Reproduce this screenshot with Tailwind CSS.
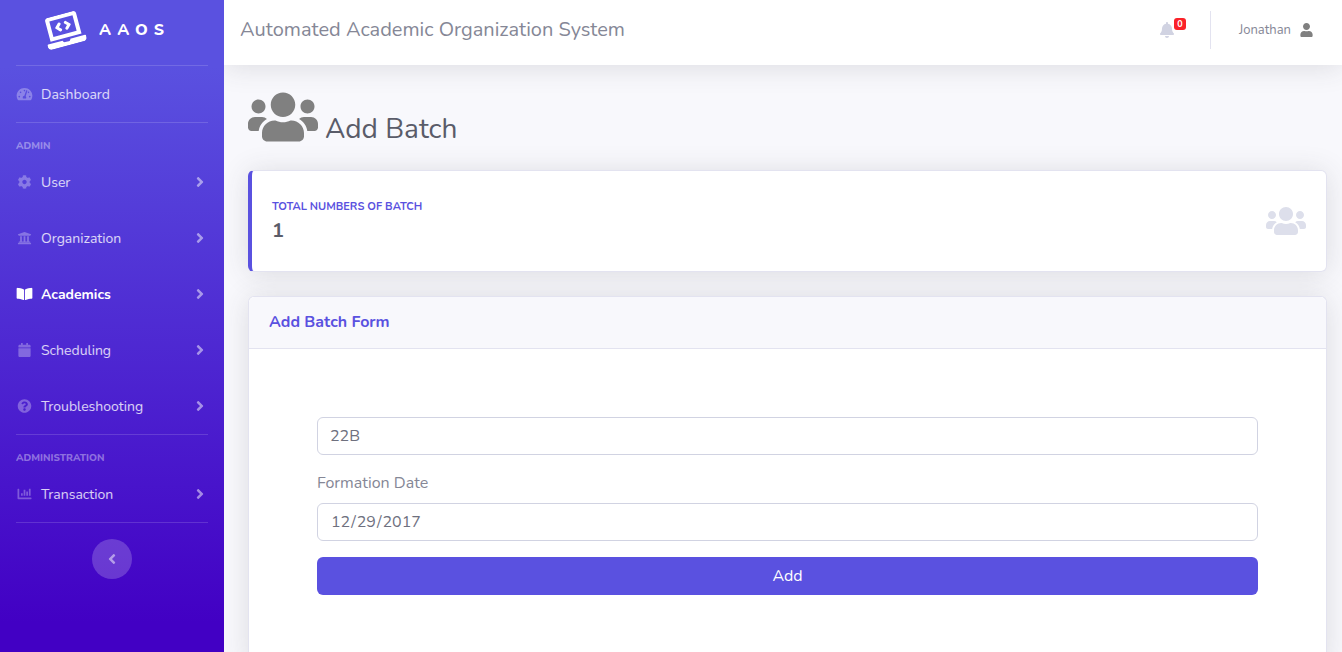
<!DOCTYPE html>
<html lang="en">
<head>
<meta charset="utf-8">
<meta name="viewport" content="width=device-width, initial-scale=1">
<title>Add Batch - Automated Academic Organization System</title>
<script src="https://cdn.jsdelivr.net/npm/@tailwindcss/browser@4"></script>
</head>
<body class="bg-[#f8f8fc] font-[Nunito,Lato,sans-serif] text-base text-[#858796]">
<svg class="hidden" aria-hidden="true">
  <symbol id="users" viewBox="0 0 640 512"><path d="M96 224c35.3 0 64-28.7 64-64s-28.7-64-64-64-64 28.7-64 64 28.7 64 64 64zm448 0c35.3 0 64-28.7 64-64s-28.7-64-64-64-64 28.7-64 64 28.7 64 64 64zm32 32h-64c-17.6 0-33.5 7.1-45.1 18.6 40.3 22.1 68.9 62 75.1 109.4h66c17.7 0 32-14.3 32-32v-32c0-35.3-28.7-64-64-64zm-256 0c61.9 0 112-50.1 112-112S381.9 32 320 32 208 82.1 208 144s50.1 112 112 112zm76.8 32h-8.3c-20.8 10-43.9 16-68.5 16s-47.6-6-68.5-16h-8.3C179.6 288 128 339.6 128 403.2V432c0 26.5 21.5 48 48 48h288c26.5 0 48-21.5 48-48v-28.8c0-63.6-51.6-115.2-115.2-115.2zm-223.7-13.4C161.5 263.1 145.6 256 128 256H64c-35.3 0-64 28.7-64 64v32c0 17.7 14.3 32 32 32h65.9c6.3-47.4 34.9-87.3 75.2-109.4z"/></symbol>
  <symbol id="angle" viewBox="0 0 256 512"><path d="M224.3 273l-136 136c-9.4 9.4-24.6 9.4-33.9 0l-22.6-22.6c-9.4-9.4-9.4-24.6 0-33.9l96.4-96.4-96.4-96.4c-9.4-9.4-9.4-24.6 0-33.9L54.3 103c9.4-9.4 24.6-9.4 33.9 0l136 136c9.5 9.4 9.5 24.6.1 34z"/></symbol>
</svg>
<div class="flex min-h-screen">
  <nav class="flex w-56 shrink-0 flex-col bg-linear-to-b/srgb from-[#5a51e0] from-10% to-[#4200c4] to-94% text-sm leading-[21px] text-white/80" aria-label="Main">
    <a href="#" class="flex h-[65px] items-center justify-center gap-[15px] pr-2.5 pb-1.5 text-base font-extrabold tracking-[6px] text-white">
      <svg class="h-8 w-10 -rotate-15 fill-current" viewBox="0 0 640 512" aria-hidden="true"><path d="M255.03 261.65c6.25 6.25 16.38 6.25 22.63 0l11.31-11.31c6.25-6.25 6.25-16.38 0-22.63L253.25 192l35.71-35.72c6.25-6.25 6.25-16.38 0-22.63l-11.31-11.31c-6.25-6.25-16.38-6.25-22.63 0l-58.34 58.34c-6.25 6.25-6.25 16.38 0 22.63l58.35 58.34zm96.01-11.3l11.31 11.31c6.25 6.25 16.38 6.25 22.63 0l58.34-58.34c6.25-6.25 6.25-16.38 0-22.63l-58.34-58.34c-6.25-6.25-16.38-6.25-22.63 0l-11.31 11.31c-6.25 6.25-6.25 16.38 0 22.63L386.75 192l-35.71 35.72c-6.25 6.25-6.25 16.38 0 22.63zM624 416H381.54c-.74 19.81-14.71 32-32.74 32H288c-18.69 0-33.02-17.47-32.77-32H16c-8.8 0-16 7.2-16 16v16c0 35.2 28.8 64 64 64h512c35.2 0 64-28.8 64-64v-16c0-8.8-7.2-16-16-16zM576 48c0-26.4-21.6-48-48-48H112C85.6 0 64 21.6 64 48v336h512V48zm-64 272H128V64h384v256z"/></svg>
      <span>AAOS</span>
    </a>
    <hr class="mx-4 border-white/15">
    <a href="#" class="flex h-14 items-center gap-2 px-4">
      <svg class="h-3.5 w-[17px] fill-white/30" viewBox="0 0 576 512" aria-hidden="true"><path d="M288 32C128.94 32 0 160.94 0 320c0 52.8 14.25 102.26 39.06 144.8 5.61 9.62 16.3 15.2 27.44 15.2h443c11.14 0 21.83-5.58 27.44-15.2C561.75 422.26 576 372.8 576 320c0-159.06-128.94-288-288-288zm0 64c14.71 0 26.58 10.13 30.32 23.65-1.11 2.26-2.64 4.23-3.45 6.67l-9.22 27.67c-5.13 3.49-10.97 6.01-17.64 6.01-17.67 0-32-14.33-32-32S270.33 96 288 96zM96 384c-17.67 0-32-14.33-32-32s14.33-32 32-32 32 14.33 32 32-14.33 32-32 32zm48-160c-17.67 0-32-14.33-32-32s14.33-32 32-32 32 14.33 32 32-14.33 32-32 32zm246.77-72.41l-61.33 184C343.13 347.33 352 364.54 352 384c0 11.72-3.38 22.55-8.88 32H232.88c-5.5-9.45-8.88-20.28-8.88-32 0-33.94 26.5-61.43 59.9-63.59l61.34-184.01c4.17-12.56 17.73-19.45 30.36-15.17 12.57 4.19 19.35 17.79 15.17 30.36zm14.66 57.2l15.52-46.55c3.47-1.29 7.13-2.23 11.05-2.23 17.67 0 32 14.33 32 32s-14.33 32-32 32c-11.38-.01-20.89-6.28-26.57-15.22zM480 384c-17.67 0-32-14.33-32-32s14.33-32 32-32 32 14.33 32 32-14.33 32-32 32z"/></svg>
      <span>Dashboard</span>
    </a>
    <hr class="mx-4 border-white/15">
    <h2 class="px-4 pt-4 text-[10px] leading-[15px] font-extrabold text-white/40 uppercase">Admin</h2>
    <a href="#" class="flex h-14 items-center gap-2 px-4">
      <svg class="h-3.5 w-[17px] fill-white/30" viewBox="0 0 512 512" aria-hidden="true"><path d="M487.4 315.7l-42.6-24.6c4.3-23.2 4.3-47 0-70.2l42.6-24.6c4.9-2.8 7.1-8.6 5.5-14-11.1-35.6-30-67.8-54.7-94.6-3.8-4.1-10-5.1-14.8-2.3L380.8 110c-17.9-15.4-38.5-27.3-60.8-35.1V25.8c0-5.6-3.9-10.5-9.4-11.7-36.7-8.2-74.3-7.8-109.2 0-5.5 1.2-9.4 6.1-9.4 11.7V75c-22.2 7.9-42.8 19.8-60.8 35.1L88.7 85.5c-4.9-2.8-11-1.9-14.8 2.3-24.7 26.7-43.6 58.9-54.7 94.6-1.7 5.4.6 11.2 5.5 14L67.3 221c-4.3 23.2-4.3 47 0 70.2l-42.6 24.6c-4.9 2.8-7.1 8.6-5.5 14 11.1 35.6 30 67.8 54.7 94.6 3.8 4.1 10 5.1 14.8 2.3l42.6-24.6c17.9 15.4 38.5 27.3 60.8 35.1v49.2c0 5.6 3.9 10.5 9.4 11.7 36.7 8.2 74.3 7.8 109.2 0 5.5-1.2 9.4-6.1 9.4-11.7v-49.2c22.2-7.9 42.8-19.8 60.8-35.1l42.6 24.6c4.9 2.8 11 1.9 14.8-2.3 24.7-26.7 43.6-58.9 54.7-94.6 1.5-5.5-.7-11.3-5.6-14.1zM256 336c-44.1 0-80-35.9-80-80s35.9-80 80-80 80 35.9 80 80-35.9 80-80 80z"/></svg>
      <span>User</span>
      <svg class="ml-auto h-4 w-4 fill-white/50" aria-hidden="true"><use href="#angle"/></svg>
    </a>
    <a href="#" class="flex h-14 items-center gap-2 px-4">
      <svg class="h-3.5 w-[17px] fill-white/30" viewBox="0 0 512 512" aria-hidden="true"><path d="M496 128v16a8 8 0 0 1-8 8h-24v12c0 6.627-5.373 12-12 12H60c-6.627 0-12-5.373-12-12v-12H24a8 8 0 0 1-8-8v-16a8 8 0 0 1 4.941-7.392l232-88a7.996 7.996 0 0 1 6.118 0l232 88A8 8 0 0 1 496 128zm-24 304H40c-13.255 0-24 10.745-24 24v16a8 8 0 0 0 8 8h464a8 8 0 0 0 8-8v-16c0-13.255-10.745-24-24-24zM96 192v192H60c-6.627 0-12 5.373-12 12v20h416v-20c0-6.627-5.373-12-12-12h-36V192h-64v192h-64V192h-64v192h-64V192H96z"/></svg>
      <span>Organization</span>
      <svg class="ml-auto h-4 w-4 fill-white/50" aria-hidden="true"><use href="#angle"/></svg>
    </a>
    <a href="#" class="flex h-14 items-center gap-2 px-4 font-bold text-white" aria-current="page">
      <svg class="h-3.5 w-[17px] fill-white" viewBox="0 0 576 512" aria-hidden="true"><path d="M542.22 32.05c-54.8 3.11-163.72 14.43-230.96 55.59-4.64 2.84-7.27 7.89-7.27 13.17v363.87c0 11.55 12.63 18.85 23.28 13.49 69.18-34.82 169.23-44.32 218.7-46.92 16.89-.89 30.02-14.43 30.02-30.66V62.75c.01-17.71-15.35-31.74-33.77-30.7zM264.73 87.64C197.5 46.48 88.58 35.17 33.78 32.05 15.36 31.01 0 45.04 0 62.75V400.6c0 16.24 13.13 29.78 30.02 30.66 49.49 2.6 149.59 12.11 218.77 46.95 10.62 5.35 23.21-1.94 23.21-13.46V100.63c0-5.29-2.62-10.14-7.27-12.99z"/></svg>
      <span>Academics</span>
      <svg class="ml-auto h-4 w-4 fill-white/50" aria-hidden="true"><use href="#angle"/></svg>
    </a>
    <a href="#" class="flex h-14 items-center gap-2 px-4">
      <svg class="h-3.5 w-[17px] fill-white/30" viewBox="0 0 448 512" aria-hidden="true"><path d="M12 192h424c6.6 0 12 5.4 12 12v260c0 26.5-21.5 48-48 48H48c-26.5 0-48-21.5-48-48V204c0-6.6 5.4-12 12-12zm436-44v-36c0-26.5-21.5-48-48-48h-48V12c0-6.6-5.4-12-12-12h-40c-6.6 0-12 5.4-12 12v52H160V12c0-6.6-5.4-12-12-12h-40c-6.6 0-12 5.4-12 12v52H48C21.5 64 0 85.5 0 112v36c0 6.6 5.4 12 12 12h424c6.6 0 12-5.4 12-12z"/></svg>
      <span>Scheduling</span>
      <svg class="ml-auto h-4 w-4 fill-white/50" aria-hidden="true"><use href="#angle"/></svg>
    </a>
    <a href="#" class="flex h-14 items-center gap-2 px-4">
      <svg class="h-3.5 w-[17px] fill-white/30" viewBox="0 0 512 512" aria-hidden="true"><path d="M504 256c0 136.997-111.043 248-248 248S8 392.997 8 256C8 119.083 119.043 8 256 8s248 111.083 248 248zM262.655 90c-54.497 0-89.255 22.957-116.549 63.758-3.536 5.286-2.353 12.415 2.715 16.258l34.699 26.31c5.205 3.947 12.621 3.008 16.665-2.122 17.864-22.658 30.113-35.797 57.303-35.797 20.429 0 45.698 13.148 45.698 32.958 0 14.976-12.363 22.667-32.534 33.976C247.128 238.528 216 254.941 216 296v4c0 6.627 5.373 12 12 12h56c6.627 0 12-5.373 12-12v-1.333c0-28.462 83.186-29.647 83.186-106.667 0-58.002-60.165-102-116.531-102zM256 338c-25.365 0-46 20.635-46 46 0 25.364 20.635 46 46 46s46-20.636 46-46c0-25.365-20.635-46-46-46z"/></svg>
      <span>Troubleshooting</span>
      <svg class="ml-auto h-4 w-4 fill-white/50" aria-hidden="true"><use href="#angle"/></svg>
    </a>
    <hr class="mx-4 border-white/15">
    <h2 class="px-4 pt-4 text-[10px] leading-[15px] font-extrabold text-white/40 uppercase">Administration</h2>
    <a href="#" class="flex h-14 items-center gap-2 px-4">
      <svg class="h-3.5 w-[17px] fill-white/30" viewBox="0 0 512 512" aria-hidden="true"><path d="M332.8 320h38.4c6.4 0 12.8-6.4 12.8-12.8V172.8c0-6.4-6.4-12.8-12.8-12.8h-38.4c-6.4 0-12.8 6.4-12.8 12.8v134.4c0 6.4 6.4 12.8 12.8 12.8zm96 0h38.4c6.4 0 12.8-6.4 12.8-12.8V76.8c0-6.4-6.4-12.8-12.8-12.8h-38.4c-6.4 0-12.8 6.4-12.8 12.8v230.4c0 6.4 6.4 12.8 12.8 12.8zm-288 0h38.4c6.4 0 12.8-6.4 12.8-12.8v-70.4c0-6.4-6.4-12.8-12.8-12.8h-38.4c-6.4 0-12.8 6.4-12.8 12.8v70.4c0 6.4 6.4 12.8 12.8 12.8zm96 0h38.4c6.4 0 12.8-6.4 12.8-12.8V108.8c0-6.4-6.4-12.8-12.8-12.8h-38.4c-6.4 0-12.8 6.4-12.8 12.8v198.4c0 6.4 6.4 12.8 12.8 12.8zM496 384H64V80c0-8.84-7.16-16-16-16H16C7.16 64 0 71.16 0 80v336c0 17.67 14.33 32 32 32h464c8.84 0 16-7.16 16-16v-32c0-8.84-7.16-16-16-16z"/></svg>
      <span>Transaction</span>
      <svg class="ml-auto h-4 w-4 fill-white/50" aria-hidden="true"><use href="#angle"/></svg>
    </a>
    <hr class="mx-4 border-white/15">
    <button type="button" class="mt-4 flex size-10 items-center justify-center self-center rounded-full bg-white/20" aria-label="Collapse sidebar">
      <svg class="size-4 rotate-180 fill-white/50" aria-hidden="true"><use href="#angle"/></svg>
    </button>
  </nav>

  <div class="flex min-w-0 flex-1 flex-col overflow-hidden">
    <header class="flex h-[65px] items-center justify-between bg-white pr-[29px] pb-1.5 pl-4 shadow-[0_2px_28px_rgba(58,59,69,0.15)]">
      <span class="text-xl">Automated Academic Organization System</span>
      <div class="flex items-center">
        <button type="button" class="relative mr-9" aria-label="Notifications">
          <svg class="h-4 w-3.5 fill-[#d1d3e2]" viewBox="0 0 448 512" aria-hidden="true"><path d="M224 512c35.32 0 63.97-28.65 63.97-64H160.03c0 35.35 28.65 64 63.97 64zm215.39-149.71c-19.32-20.76-55.47-51.99-55.47-154.29 0-77.7-54.48-139.9-127.94-155.16V32c0-17.67-14.32-32-31.98-32s-31.98 14.33-31.98 32v20.84C118.56 68.1 64.08 130.3 64.08 208c0 102.3-36.15 133.53-55.47 154.29-6 6.45-8.66 14.16-8.61 21.71.11 16.4 12.98 32 32.1 32h383.8c19.12 0 32-15.6 32.1-32 .05-7.55-2.61-15.27-8.61-21.71z"/></svg>
          <span class="absolute -top-1 left-3.5 flex h-3 w-3 items-center justify-center rounded-[3px] bg-[#fa2229] text-[9px] leading-3 font-bold text-white">0</span>
        </button>
        <div class="h-[38px] border-l border-[#e3e3f0]"></div>
        <a href="#" class="ml-7 flex items-center gap-[9px] text-[13px] leading-5">
          <span>Jonathan</span>
          <svg class="h-3.5 w-[13px] fill-[#808080]" viewBox="0 0 448 512" aria-hidden="true"><path d="M224 256c70.7 0 128-57.3 128-128S294.7 0 224 0 96 57.3 96 128s57.3 128 128 128zm89.6 32h-16.7c-22.2 10.2-46.9 16-72.9 16s-50.6-5.8-72.9-16h-16.7C60.2 288 0 348.2 0 422.4V464c0 26.5 21.5 48 48 48h352c26.5 0 48-21.5 48-48v-41.6c0-74.2-60.2-134.4-134.4-134.4z"/></svg>
        </a>
      </div>
    </header>

    <main class="flex flex-1 flex-col gap-6 pt-6 pr-[15px] pl-6">
      <h1 class="flex items-end gap-[7px] pb-px text-[28px] leading-8 text-[#5a5c69]">
        <svg class="h-14 w-[70px] fill-[#808080]" aria-hidden="true"><use href="#users"/></svg>
        <span>Add Batch</span>
      </h1>
      <section class="flex h-[102px] items-center justify-between rounded-md border border-l-4 border-[#e3e3f0] border-l-[#5a51e0] bg-white px-5 shadow-[0_2px_28px_rgba(58,59,69,0.15)]">
        <div>
          <h2 class="mb-1 text-[11px] leading-4 font-bold text-[#5a51e0] uppercase">Total numbers of batch</h2>
          <p class="text-xl leading-6 font-bold text-[#5a5c69]">1</p>
        </div>
        <svg class="h-8 w-10 fill-[#dddfeb]" aria-hidden="true"><use href="#users"/></svg>
      </section>
      <section class="flex-1 rounded-t-md border border-b-0 border-[#e3e3f0] bg-white shadow-[0_2px_28px_rgba(58,59,69,0.15)]">
        <h2 class="rounded-t-md border-b border-[#e3e3f0] bg-[#f8f8fc] px-5 py-3 text-base leading-[27px] font-bold text-[#5a51e0]">Add Batch Form</h2>
        <form class="flex flex-col p-17">
          <input type="text" value="22B" aria-label="Batch" class="h-[38px] w-full rounded-md border border-[#d1d3e2] bg-white px-3 text-[#6e707e]">
          <label for="formation" class="mt-4 mb-2 leading-6">Formation Date</label>
          <input id="formation" type="date" value="2017-12-29" class="h-[38px] w-full rounded-md border border-[#d1d3e2] bg-white px-3 text-[#6e707e] [&::-webkit-calendar-picker-indicator]:hidden">
          <button type="submit" class="mt-4 h-[38px] rounded-md bg-[#5a51e0] text-white">Add</button>
        </form>
      </section>
    </main>
  </div>
</div>
</body>
</html>
